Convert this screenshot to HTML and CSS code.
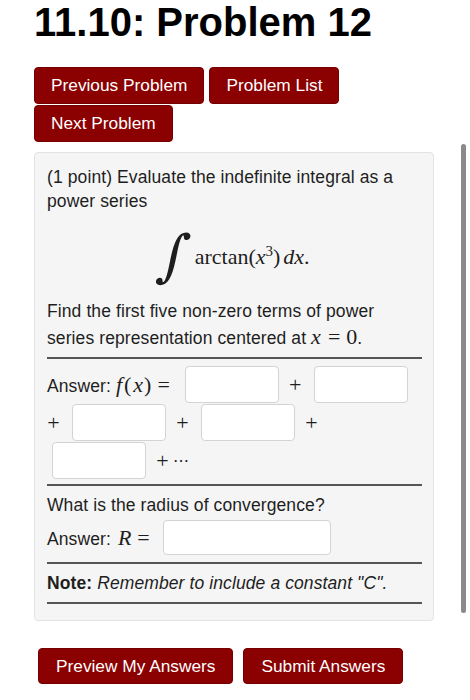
FILE: index.html
```
<!DOCTYPE html>
<html>
<head>
<meta charset="utf-8">
<link rel="stylesheet" href="styles.css">
</head>
<body>
<div class="page">
  <h1 class="title">11.10: Problem 12</h1>
  <div class="nav">
    <button class="btn">Previous Problem</button>
    <button class="btn">Problem List</button>
    <button class="btn">Next Problem</button>
  </div>
  <div class="panel">
    <p class="p1">(1 point) Evaluate the indefinite integral as a power series</p>
    <div class="display">
      <span class="int">∫</span>
      <span class="expr">arctan(<i>x</i><sup class="sup">3</sup>)<i class="dx">dx</i>.</span>
    </div>
    <p class="p2">Find the first five non-zero terms of power series representation centered at <span class="m"><i class="x0">x</i><span class="eq">=</span>0</span>.</p>
    <hr class="rule">
    <div class="answers">
      <div class="row">
        <span class="label">Answer: <span class="m"><i class="f">f</i>(<i class="x">x</i>)<span class="eq">=</span></span></span>
        <span class="box first"></span>
        <span class="plus">+</span>
        <span class="box"></span>
      </div>
      <div class="row">
        <span class="plus lead">+</span>
        <span class="box"></span>
        <span class="plus">+</span>
        <span class="box"></span>
        <span class="plus">+</span>
      </div>
      <div class="row">
        <span class="box indent"></span>
        <span class="plus">+</span>
        <span class="dots">⋯</span>
      </div>
    </div>
    <hr class="rule r2">
    <p class="q">What is the radius of convergence?</p>
    <div class="row rrow">
      <span class="label">Answer: <span class="m"><i class="r">R</i><span class="eq">=</span></span></span>
      <span class="box wide"></span>
    </div>
    <hr class="rule r3">
    <p class="note"><b>Note:</b> <i>Remember to include a constant "C".</i></p>
    <hr class="rule r3">
  </div>
  <div class="submit">
    <button class="btn low">Preview My Answers</button>
    <button class="btn low">Submit Answers</button>
  </div>
  <div class="scrollbar"></div>
</div>
</body>
</html>
```
FILE: styles.css
```
body {
  margin: 0;
  background: #fff;
  font-family: "Liberation Sans", Arial, sans-serif;
  font-size: 17.5px;
  letter-spacing: 0.1px;
  color: #1e1e1e;
}
.page {
  width: 400px;
  padding-left: 34px;
}
.title {
  margin: 1px 0 0;
  font-size: 40px;
  line-height: 42px;
  font-weight: bold;
  letter-spacing: 0;
  color: #000;
}
.nav {
  display: flex;
  flex-wrap: wrap;
  gap: 1px 5px;
  margin-top: 24px;
}
.btn {
  box-sizing: border-box;
  height: 37px;
  padding: 0 16px;
  background: #8b0000;
  color: #fff;
  border: 1px solid #750000;
  border-radius: 4px;
  font-family: "Liberation Sans", Arial, sans-serif;
  font-size: 17.3px;
  letter-spacing: 0;
  line-height: 35px;
}
.btn.low {
  height: 36px;
  line-height: 34px;
  padding: 0 17px;
}
.panel {
  margin-top: 10px;
  box-sizing: border-box;
  background: #f5f5f5;
  border: 1px solid #e3e3e3;
  border-radius: 4px;
  padding: 12px 11px 16px 12px;
}
.p1, .p2, .q, .note {
  margin: 0;
  line-height: 24px;
}
.p2 {
  line-height: 25px;
}
.display {
  height: 86px;
  display: flex;
  justify-content: center;
  align-items: center;
}
.int {
  display: inline-block;
  font-family: "DejaVu Serif", serif;
  font-size: 56px;
  line-height: 56px;
  margin: 0 6px 0 0;
  transform: skewX(-10deg);
}
.expr {
  font-family: "Liberation Serif", serif;
  font-size: 22px;
  letter-spacing: 0;
  margin-top: 2px;
}
.sup {
  font-size: 15px;
  vertical-align: 8px;
  line-height: 0;
}
.dx {
  margin-left: 3px;
}
.m {
  font-family: "Liberation Serif", serif;
  font-size: 22px;
  letter-spacing: 0;
}
.m .f { margin-right: 2px; }
.m .x { margin: 0 1px 0 2px; }
.m .x0 { margin-right: 1px; }
.m .r { margin-left: 2px; }
.eq {
  margin: 0 6px;
}
.rule {
  border: 0;
  height: 2px;
  background: #555;
  margin: 6px 0 0;
}
.rule.r2 { margin-top: 5px; }
.rule.r3 { margin-top: 7px; }
.answers {
  margin-top: 7px;
  display: flex;
  flex-direction: column;
  gap: 1px;
}
.row {
  display: flex;
  align-items: center;
  height: 37px;
}
.box {
  box-sizing: border-box;
  width: 94px;
  height: 37px;
  background: #fff;
  border: 1px solid #d3d3d3;
  border-radius: 4px;
}
.box.first { margin-left: 9px; }
.box.indent { margin-left: 5px; }
.plus {
  display: inline-block;
  width: 13px;
  text-align: center;
  font-family: "Liberation Serif", serif;
  font-size: 22px;
  margin: 0 12px 0 10px;
}
.plus.lead { margin-left: 0; }
.dots {
  font-family: "DejaVu Serif", serif;
  font-size: 16px;
  margin-left: -8px;
}
.q { margin-top: 7px; }
.rrow {
  margin-top: 3px;
  height: 35px;
}
.box.wide {
  width: 168px;
  height: 35px;
  margin-left: 7px;
}
.note { margin-top: 7px; }
.submit {
  display: flex;
  gap: 10px;
  margin: 27px 0 0 4px;
}
.scrollbar {
  position: absolute;
  left: 461px;
  top: 144px;
  width: 5px;
  height: 469px;
  background: #8a8a8a;
  border-radius: 3px;
}
```
